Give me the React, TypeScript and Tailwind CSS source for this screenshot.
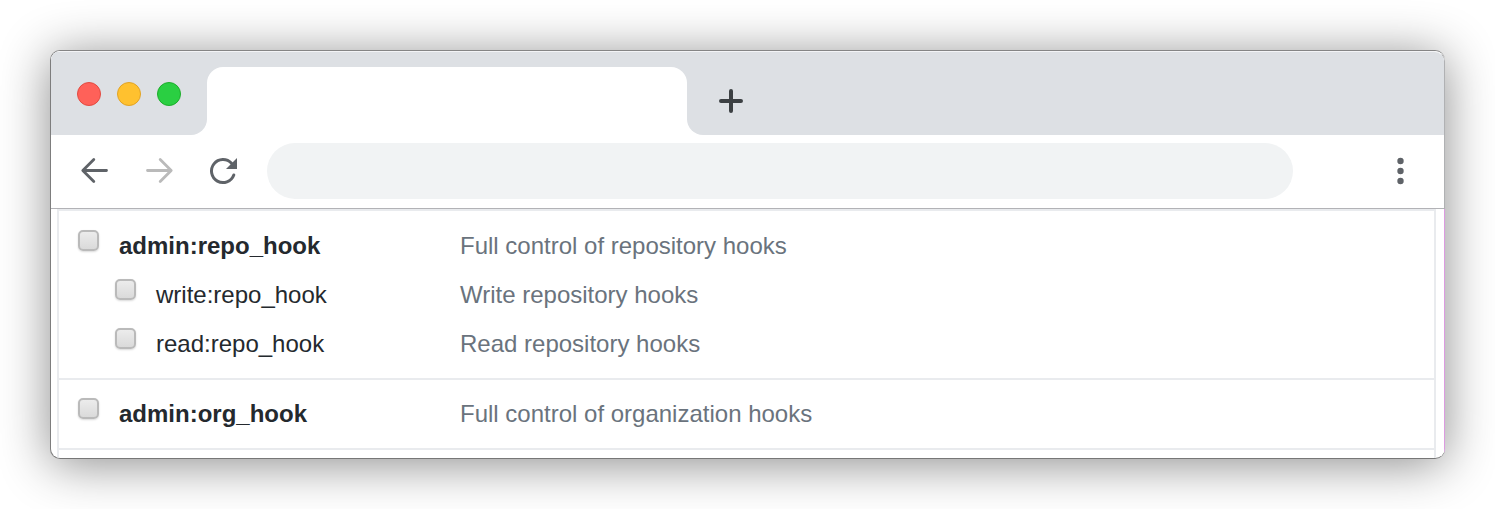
import clsx from 'clsx'

type Scope = {
  name: string
  description: string
  child?: boolean
}

const groups: Scope[][] = [
  [
    { name: 'admin:repo_hook', description: 'Full control of repository hooks' },
    {
      name: 'write:repo_hook',
      description: 'Write repository hooks',
      child: true,
    },
    {
      name: 'read:repo_hook',
      description: 'Read repository hooks',
      child: true,
    },
  ],
  [
    {
      name: 'admin:org_hook',
      description: 'Full control of organization hooks',
    },
  ],
]

function TabBar() {
  return (
    <header className="flex h-[84px] rounded-tr-[10px] border-t border-r border-t-[#f3f4f6] border-r-[#b0b1b3] bg-white">
      {/* window buttons */}
      <div className="flex w-[156px] items-start gap-4 rounded-br-2xl bg-[#dde0e4] pt-[30px] pl-[26px]">
        <button
          aria-label="Close"
          className="size-6 rounded-full border border-[#e24b41] bg-[#ff6159]"
        />
        <button
          aria-label="Minimize"
          className="size-6 rounded-full border border-[#e1a325] bg-[#ffc12f]"
        />
        <button
          aria-label="Maximize"
          className="size-6 rounded-full border border-[#1dad2b] bg-[#2acf42]"
        />
      </div>

      {/* tab */}
      <div className="w-[480px] bg-[#dde0e4] pt-[15px]">
        <div className="h-full rounded-t-2xl bg-white" />
      </div>

      <div className="flex flex-1 items-center rounded-tr-[9px] rounded-bl-2xl bg-[#dde0e4] pt-[14px] pl-8">
        <button aria-label="New tab">
          <svg width="24" height="24" viewBox="0 0 24 24" fill="none">
            <path
              d="M12 2v20M2 12h20"
              stroke="#3c4043"
              strokeWidth="4"
              strokeLinecap="round"
            />
          </svg>
        </button>
      </div>
    </header>
  )
}

function Toolbar() {
  return (
    <nav className="border-r border-[#b0b1b3]">
      <div className="flex h-[74px] items-center border-b border-[#b2b2b6] bg-white pr-[35px] pb-[1px] pl-7">
        <button aria-label="Back" className="mr-8">
          <svg width="32" height="32" viewBox="0 0 32 32" fill="none">
            <path
              d="M27.500 15.500H4M14.800 4.500L3.800 15.500l11 11"
              stroke="#5f6368"
              strokeWidth="2.800"
              strokeLinecap="round"
              strokeLinejoin="round"
            />
          </svg>
        </button>
        <button aria-label="Forward" className="mr-8">
          <svg width="32" height="32" viewBox="0 0 32 32" fill="none">
            <path
              d="M4.500 15.500H28M17.200 4.500l11 11-11 11"
              stroke="#bababa"
              strokeWidth="2.800"
              strokeLinecap="round"
              strokeLinejoin="round"
            />
          </svg>
        </button>
        <button aria-label="Reload" className="mr-7">
          <svg width="32" height="32" viewBox="0 0 32 32" fill="none">
            <path
              d="M26.800 20A11.500 11.500 0 1 1 24.500 8.300"
              stroke="#5f6368"
              strokeWidth="3"
              strokeLinecap="round"
            />
            <path d="M30 3v11H19z" fill="#5f6368" />
          </svg>
        </button>
        <input
          type="text"
          aria-label="Address"
          className="mr-[100px] h-14 min-w-0 flex-1 rounded-full bg-[#f1f3f4] px-7 outline-none"
        />
        <button aria-label="Menu">
          <svg width="16" height="32" viewBox="0 0 16 32" fill="#5f6368">
            <circle cx="7.500" cy="6" r="3.200" />
            <circle cx="7.500" cy="16" r="3.200" />
            <circle cx="7.500" cy="26" r="3.200" />
          </svg>
        </button>
      </div>
    </nav>
  )
}

function ScopeRow({ name, description, child }: Scope) {
  return (
    <li className="grid h-[49px] grid-cols-[401px_1fr] items-center">
      <div className={clsx('flex items-center', child ? 'pl-14' : 'pl-[19px]')}>
        <input
          id={name}
          type="checkbox"
          className="mr-5 mb-[10px] size-[21px] appearance-none rounded-[5px] border-2 border-[#bababa] bg-linear-to-b from-[#ececec] to-[#dadada] shadow-[0_1px_2px_rgba(0,0,0,0.15)]"
        />
        <label
          htmlFor={name}
          className={clsx('text-[#24292e]', !child && 'font-bold')}
        >
          {name}
        </label>
      </div>
      <span className="text-[#6a737d]">{description}</span>
    </li>
  )
}

export default function App() {
  return (
    <div className="bg-white p-[50px] font-['Liberation_Sans',Arial,sans-serif] text-[24px] leading-8">
      <div className="overflow-hidden rounded-[10px] border border-r-0 border-t-[#858585] border-b-[#777777] border-l-[#7d7d7d] bg-white shadow-[0_5px_50px_rgba(0,0,0,0.46)]">
        <TabBar />
        <Toolbar />
        <main className="border-r border-[#dc9be0] pr-2 pl-[6px]">
          <div className="border-x-2 border-t-2 border-[#e9ebee] pt-[1px] pb-[8px]">
            {groups.map((scopes) => (
              <ul
                key={scopes[0].name}
                className="border-b-2 border-[#e9ebee] pt-[9px] pb-[10px]"
              >
                {scopes.map((scope) => (
                  <ScopeRow key={scope.name} {...scope} />
                ))}
              </ul>
            ))}
          </div>
        </main>
      </div>
    </div>
  )
}
